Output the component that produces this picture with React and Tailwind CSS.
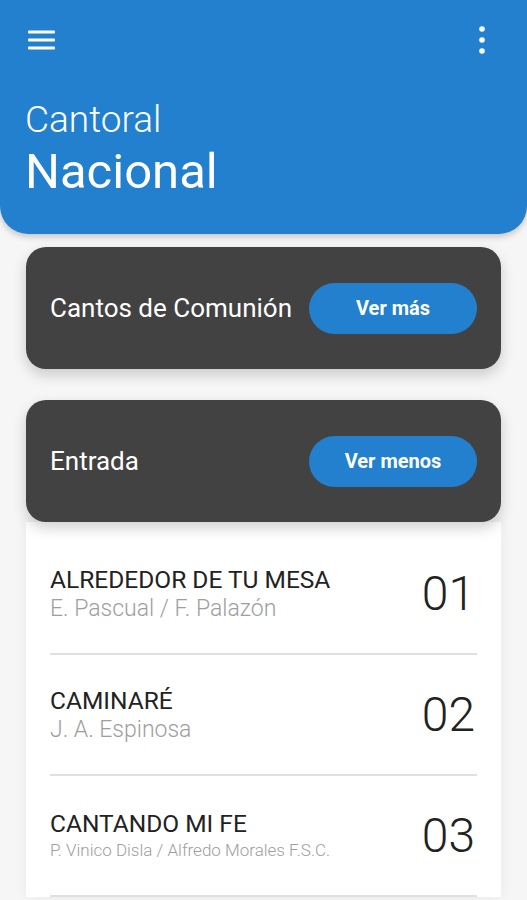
import React from "react";

const songs = [
  { t: "ALREDEDOR DE TU MESA", a: "E. Pascual / F. Palazón", n: "01", small: false },
  { t: "CAMINARÉ", a: "J. A. Espinosa", n: "02", small: false },
  { t: "CANTANDO MI FE", a: "P. Vinico Disla / Alfredo Morales F.S.C.", n: "03", small: true },
];

function Card({ label, button }) {
  return (
    <div className="h-[122px] rounded-[20px] bg-[#424242] shadow-[0_6px_14px_rgba(0,0,0,0.18)] flex items-center justify-between pl-[24px] pr-[24px]">
      <span className="text-white text-[26px] leading-none">{label}</span>
      <div className="w-[168px] h-[51px] rounded-full bg-[#2280ce] flex items-center justify-center">
        <span className="text-white text-[20px] font-bold leading-none">{button}</span>
      </div>
    </div>
  );
}

export default function App() {
  return (
    <div className="w-[527px] h-[900px] overflow-hidden bg-[#f6f6f6] font-['Roboto',sans-serif]">
      <header className="h-[234px] bg-[#2280ce] rounded-b-[28px] shadow-[0_3px_6px_rgba(0,0,0,0.2)] relative z-10">
        <div className="flex items-start justify-between pl-[28px] pr-[42px] pt-[26px]">
          <svg width="27" height="20" viewBox="0 0 27 20" className="mt-[4px]">
            <rect x="0" y="0.5" width="27" height="3" rx="1" fill="white" />
            <rect x="0" y="8.5" width="27" height="3" rx="1" fill="white" />
            <rect x="0" y="16.5" width="27" height="3" rx="1" fill="white" />
          </svg>
          <svg width="6" height="30" viewBox="0 0 6 30">
            <circle cx="3" cy="3" r="2.8" fill="white" />
            <circle cx="3" cy="14" r="2.8" fill="white" />
            <circle cx="3" cy="25" r="2.8" fill="white" />
          </svg>
        </div>
        <div className="pl-[25px] mt-[42px] text-white">
          <div className="text-[37px] font-light leading-[44px]">Cantoral</div>
          <div className="text-[49px] leading-[60px]">Nacional</div>
        </div>
      </header>

      <div className="px-[26px] pt-[13px] flex flex-col gap-[31px] relative z-[5]">
        <Card label="Cantos de Comunión" button="Ver más" />
        <Card label="Entrada" button="Ver menos" />
      </div>

      <div className="mx-[26px] bg-white shadow-[0_0_14px_rgba(0,0,0,0.06)] px-[24px] pt-[12px]">
        {songs.map((s) => (
          <div key={s.n} className="border-b-2 border-[#e0e0e0] h-[121px] flex items-center justify-between pr-[2px]">
            <div className="flex flex-col">
              <span className="text-[24.5px] leading-[29px] text-[#222]">{s.t}</span>
              <span className={(s.small ? "text-[17px] leading-[25px]" : "text-[23px] leading-[29px]") + " text-[#9e9e9e] font-light"}>{s.a}</span>
            </div>
            <span className="text-[48px] font-light leading-none text-[#222]">{s.n}</span>
          </div>
        ))}
      </div>
    </div>
  );
}
